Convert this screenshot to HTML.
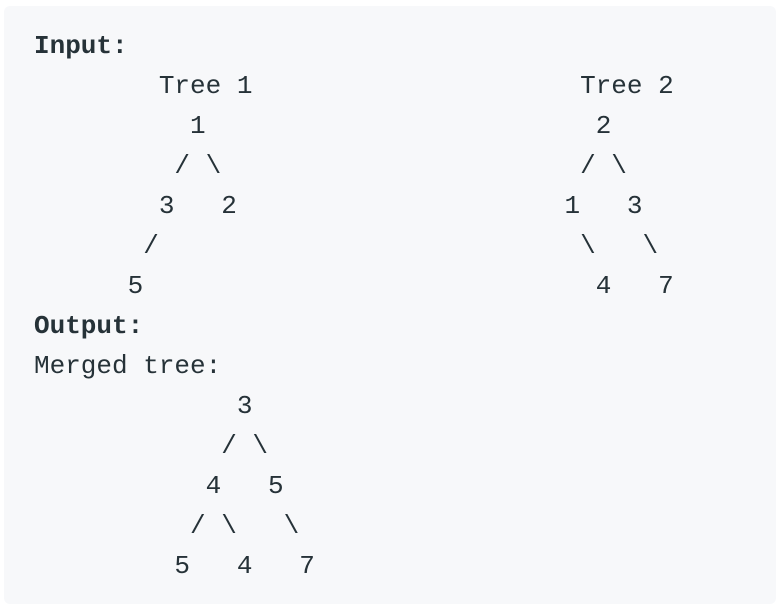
<!DOCTYPE html>
<html><head><style>
html,body{margin:0;padding:0;background:#fff;width:780px;height:606px;overflow:hidden}
.box{position:absolute;left:4px;top:6px;width:772px;height:598px;background:#f7f8fa;border-radius:6px}
pre{position:absolute;left:34px;top:26px;margin:0;font-family:"Liberation Mono","DejaVu Sans Mono",monospace;font-size:26px;line-height:40px;color:#263238;white-space:pre}
b{font-weight:bold}
</style></head><body>
<div class="box"></div>
<pre><b>Input:</b>
        Tree 1                     Tree 2
          1                         2
         / \                       / \
        3   2                     1   3
       /                           \   \
      5                             4   7
<b>Output:</b>
Merged tree:
             3
            / \
           4   5
          / \   \
         5   4   7</pre>
</body></html>
